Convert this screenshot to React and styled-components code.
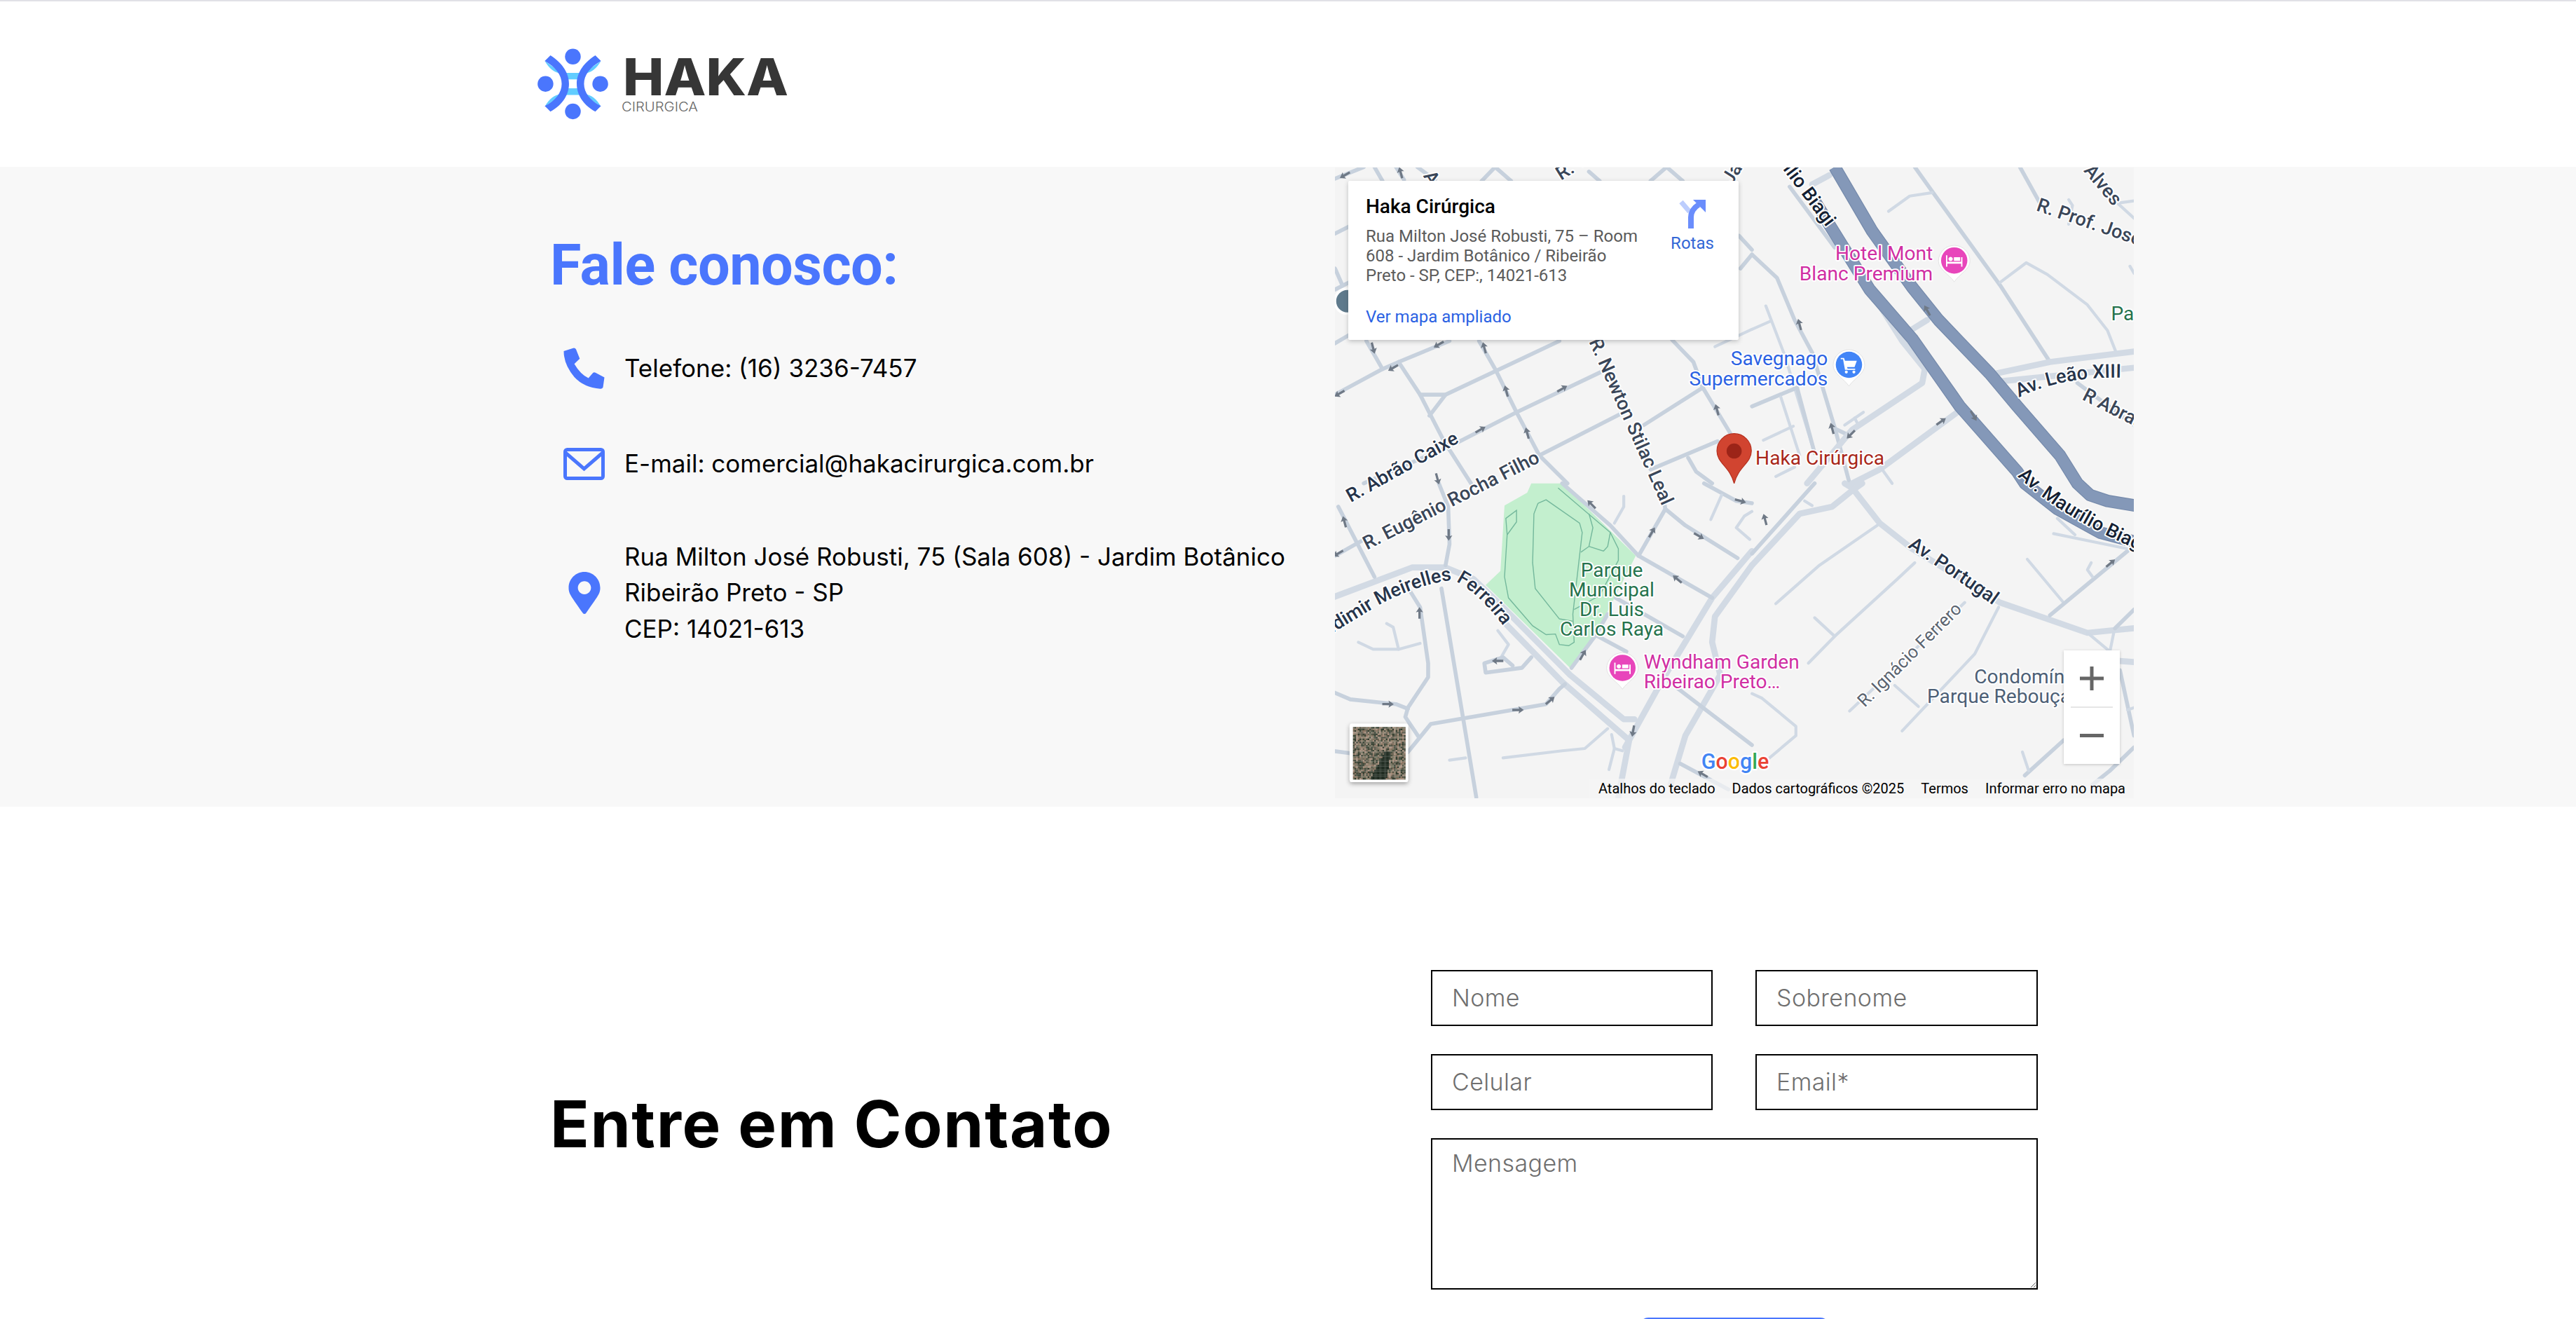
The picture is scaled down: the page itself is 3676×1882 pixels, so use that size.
import React from 'react';
import styled, { createGlobalStyle } from 'styled-components';
import { FaMapMarkerAlt } from 'react-icons/fa';

const GlobalStyle = createGlobalStyle`
  html, body {
    margin: 0;
    padding: 0;
    height: 1882px;
    overflow: hidden;
    background: #fff;
    font-family: Inter, "Liberation Sans", sans-serif;
  }
  * { box-sizing: border-box; }
`;

const Page = styled.div`
  width: 3676px;
  height: 1882px;
  overflow: hidden;
  border-top: 2px solid #e1e1e6;
`;

const Header = styled.header`
  height: 236px;
  padding: 67px 0 0 767px;
`;

const LogoSvg = styled.svg`
  display: block;
  width: 358px;
  height: 101px;
  overflow: visible;
`;

const ContactBand = styled.section`
  display: flex;
  height: 913px;
  padding: 1px 0 0 785px;
  background: #f8f8f8;
`;

const InfoColumn = styled.div`
  width: 1120px;
  flex: none;
`;

const Title = styled.h2`
  margin: 0 0 69px;
  padding-top: 92px;
  font-family: Roboto, sans-serif;
  font-size: 81px;
  line-height: 96px;
  font-weight: 700;
  letter-spacing: -0.5px;
  color: #4a76fd;
`;

const InfoList = styled.div`
  display: flex;
  flex-direction: column;
  gap: 81px;
`;

const InfoRow = styled.div`
  display: flex;
  align-items: center;
`;

const IconSlot = styled.div`
  width: 106px;
  padding-left: 19px;
  flex: none;
  display: flex;
  color: #4a76fd;
  svg { display: block; }
`;

const InfoText = styled.div`
  font-family: Inter, sans-serif;
  font-size: 35px;
  line-height: 51.5px;
  color: #000;
  white-space: nowrap;
`;

const MapFrame = styled.div`
  position: relative;
  width: 1140px;
  height: 900px;
  flex: none;
  overflow: hidden;
  background: #f4f4f4;
  font-family: Roboto, sans-serif;
`;

const MapSvg = styled.svg`
  display: block;
  width: 100%;
  height: 100%;
`;

const MapLabel = styled.text`
  font-family: Roboto, sans-serif;
  font-size: ${p => p.$size || 12}px;
  font-weight: ${p => p.$weight || 400};
  fill: ${p => p.$color || '#26344a'};
  stroke: #fff;
  stroke-width: ${p => p.$halo || 1.6}px;
  stroke-linejoin: round;
  paint-order: stroke;
`;

const InfoCard = styled.div`
  position: absolute;
  left: 19px;
  top: 19px;
  width: 557px;
  height: 227px;
  padding: 20px 25px;
  display: flex;
  justify-content: space-between;
  background: #fff;
  border-radius: 2px;
  box-shadow: 0 2px 6px rgba(60, 64, 67, 0.3);
`;

const PlaceName = styled.div`
  font-size: 28px;
  line-height: 34px;
  font-weight: 500;
  color: #000;
`;

const PlaceAddress = styled.div`
  margin-top: 11px;
  width: 400px;
  font-size: 24px;
  line-height: 28px;
  color: #5b5b5b;
`;

const EnlargeLink = styled.div`
  margin-top: 30px;
  font-size: 24px;
  line-height: 30px;
  color: #2b62e3;
`;

const Directions = styled.div`
  width: 62px;
  margin-right: 10px;
  padding-top: 6px;
  display: flex;
  flex-direction: column;
  align-items: center;
  gap: 6px;
  font-size: 24px;
  line-height: 30px;
  color: #3367d6;
`;

const ZoomBox = styled.div`
  position: absolute;
  right: 20px;
  top: 689px;
  width: 80px;
  height: 162px;
  display: flex;
  flex-direction: column;
  align-items: center;
  background: #fff;
  box-shadow: 0 1px 4px rgba(0, 0, 0, 0.2);
`;

const ZoomButton = styled.div`
  height: 80px;
  width: 100%;
  display: flex;
  align-items: center;
  justify-content: center;
`;

const ZoomDivider = styled.div`
  width: 60px;
  height: 2px;
  background: #e6e6e6;
`;

const MapFooter = styled.div`
  position: absolute;
  right: 0;
  bottom: 0;
  height: 28px;
  padding: 0 12px 0 14px;
  display: flex;
  align-items: center;
  gap: 24px;
  background: rgba(245, 245, 245, 0.72);
  font-size: 20px;
  color: #000;
  white-space: nowrap;
`;

const FormBand = styled.section`
  display: flex;
  padding-left: 785px;
`;

const FormTitle = styled.h2`
  width: 1257px;
  flex: none;
  margin: 0;
  padding-top: 398px;
  font-family: Inter, sans-serif;
  font-size: 92px;
  line-height: 110px;
  font-weight: 700;
  letter-spacing: 1.6px;
  color: #000;
`;

const FormGrid = styled.form`
  padding-top: 233px;
  display: grid;
  grid-template-columns: 402px 403px;
  column-gap: 61px;
  row-gap: 40px;
`;

const fieldCss = `
  width: 100%;
  border: 2px solid #000;
  border-radius: 0;
  background: #fff;
  padding: 0 28px;
  font-family: Inter, sans-serif;
  font-size: 34px;
  font-weight: 300;
  letter-spacing: 0.4px;
  color: #000;
  &::placeholder { color: #6f6f6f; opacity: 1; }
`;

const Field = styled.input`
  ${fieldCss}
  height: 80px;
  padding-bottom: 2px;
`;

const MessageField = styled.textarea`
  ${fieldCss}
  grid-column: 1 / 3;
  display: block;
  height: 216px;
  padding-top: 14px;
  line-height: 40px;
`;

const SubmitRow = styled.div`
  grid-column: 1 / 3;
  display: flex;
  justify-content: center;
`;

const SubmitButton = styled.button`
  width: 270px;
  height: 80px;
  border: 0;
  border-radius: 12px;
  background: #4a76fd;
  color: #fff;
  font-family: Inter, sans-serif;
  font-size: 30px;
`;

// the map was traced from zoomed crops, so each group of points keeps the
// coordinates of the crop it was read from
const zones = {
  a: ([x, y]) => [810.4 + 0.1632 * x, 98.1 + 0.1422 * y],
  b: ([x, y]) => [1066.4 + 0.1524 * x, 98.1 + 0.1422 * y],
  c: ([x, y]) => [810.4 + 0.1632 * x, 294.3 + 0.1422 * y],
  d: ([x, y]) => [1066.4 + 0.1524 * x, 294.3 + 0.1422 * y],
};

const roadKinds = {
  minor: { color: '#c7d1dd', width: 2.4 },
  thin: { color: '#d0d9e4', width: 1.8 },
  ave: { color: '#d2dae4', width: 3.7 },
};

const roads = [
  ['a', 'minor', [[13, 1000], [190, 890], [250, 860], [440, 770]]],
  ['a', 'minor', [[130, 770], [190, 890]]],
  ['a', 'minor', [[250, 860], [330, 1000], [420, 1200], [520, 1380]]],
  ['a', 'minor', [[330, 1000], [425, 1000], [850, 770]]],
  ['a', 'minor', [[425, 1000], [365, 1090]]],
  ['a', 'minor', [[550, 770], [610, 890], [690, 1075], [775, 1260], [880, 1380]]],
  ['a', 'minor', [[120, 1380], [460, 1210], [690, 1075], [1010, 900]]],
  ['a', 'minor', [[775, 1260], [1090, 1075]]],
  ['a', 'minor', [[1165, 1130], [1385, 970]]],
  ['a', 'minor', [[1270, 765], [1350, 860], [1385, 970], [1490, 1170]]],
  ['a', 'minor', [[1190, 1320], [1440, 1200]]],
  ['a', 'minor', [[1330, 1270], [1360, 1330], [1420, 1380]]],
  ['a', 'minor', [[160, 25], [190, 85]]],
  ['a', 'minor', [[240, 25], [270, 80]]],
  ['a', 'minor', [[320, 25], [390, 85]]],
  ['a', 'minor', [[13, 75], [120, 25]]],
  ['a', 'minor', [[560, 85], [610, 25], [670, 85]]],
  ['a', 'minor', [[1190, 85], [1250, 25], [1310, 85]]],
  ['a', 'minor', [[960, 45], [1000, 85]]],
  ['a', 'minor', [[13, 310], [65, 280]]],
  ['a', 'minor', [[13, 460], [40, 530]]],
  ['a', 'minor', [[13, 550], [65, 520]]],
  ['a', 'minor', [[13, 780], [65, 745]]],
  ['a', 'minor', [[1520, 320], [1568, 380]]],
  ['a', 'minor', [[1568, 400], [1525, 460]]],
  ['a', 'thin', [[1430, 795], [1568, 720]]],
  ['b', 'minor', [[150, 110], [330, 370]]],
  ['b', 'ave', [[240, 100], [310, 60]]],
  ['b', 'minor', [[650, 25], [720, 130], [990, 530], [1190, 860]]],
  ['b', 'thin', [[720, 135], [630, 150], [545, 215]]],
  ['b', 'minor', [[1070, 25], [1150, 180]]],
  ['b', 'thin', [[1265, 165], [1280, 190], [1265, 270]]],
  ['b', 'thin', [[990, 520], [1095, 435], [1180, 485], [1340, 615], [1420, 725], [1455, 820]]],
  ['b', 'ave', [[950, 915], [1190, 860], [1526, 815]]],
  ['b', 'ave', [[970, 945], [1526, 885]]],
  ['b', 'minor', [[1300, 950], [1526, 1130]]],
  ['b', 'thin', [[1460, 180], [1526, 170]]],
  ['b', 'thin', [[1460, 180], [1526, 245]]],
  ['b', 'thin', [[1510, 450], [1526, 480]]],
  ['b', 'minor', [[0, 400], [100, 500], [170, 680], [240, 820], [330, 1140], [390, 1380]]],
  ['b', 'thin', [[55, 620], [130, 830], [250, 1250]]],
  ['b', 'thin', [[0, 720], [75, 685]]],
  ['b', 'minor', [[0, 1050], [180, 970], [250, 1250]]],
  ['b', 'thin', [[115, 1010], [190, 1260]]],
  ['b', 'thin', [[45, 1195], [165, 1135]]],
  ['b', 'thin', [[95, 1350], [170, 1310]]],
  ['b', 'minor', [[320, 1140], [380, 1170]]],
  ['b', 'thin', [[370, 1130], [445, 1075]]],
  ['b', 'thin', [[410, 1100], [420, 1120]]],
  ['b', 'ave', [[220, 1380], [400, 1150], [680, 950], [690, 890], [600, 770], [470, 550]]],
  ['b', 'ave', [[400, 1380], [510, 1320], [840, 1060]]],
  ['b', 'thin', [[520, 1320], [560, 1380]]],
  ['b', 'ave', [[640, 720], [700, 680]]],
  ['b', 'thin', [[1150, 1160], [1230, 1260]]],
  ['c', 'ave', [[0, 490], [300, 360], [425, 360], [530, 410], [630, 520], [890, 820], [1090, 1010], [1130, 1010]]],
  ['c', 'ave', [[640, 590], [860, 850], [1110, 1100], [1070, 1344]]],
  ['c', 'ave', [[1095, 1130], [1240, 830], [1420, 490], [1568, 290]]],
  ['c', 'ave', [[1265, 1290], [1320, 1080], [1430, 860], [1450, 820], [1420, 680], [1430, 570], [1568, 350]]],
  ['c', 'minor', [[25, 100], [160, 400]]],
  ['c', 'minor', [[13, 310], [90, 260], [130, 235]]],
  ['c', 'minor', [[400, 0], [435, 100], [440, 260], [425, 350]]],
  ['c', 'minor', [[410, 450], [540, 1344]]],
  ['c', 'minor', [[295, 465], [330, 530], [360, 770], [360, 830], [285, 960], [275, 1000], [325, 1085]]],
  ['c', 'minor', [[0, 890], [70, 925], [240, 945], [285, 965]]],
  ['c', 'minor', [[285, 1150], [370, 1030], [800, 945], [850, 880], [870, 860]]],
  ['c', 'minor', [[0, 1145], [65, 1155]]],
  ['c', 'thin', [[100, 680], [155, 710], [250, 710], [330, 685]]],
  ['c', 'thin', [[205, 600], [230, 615], [250, 710]]],
  ['c', 'thin', [[620, 630], [660, 690], [635, 740]]],
  ['c', 'minor', [[745, 745], [710, 790], [575, 810], [570, 770], [640, 745], [675, 780]]],
  ['c', 'thin', [[640, 1175], [860, 1145], [945, 1135], [1030, 1050]]],
  ['c', 'thin', [[440, 1185], [500, 1175]]],
  ['c', 'thin', [[1045, 1075], [1055, 1135], [1035, 1225]]],
  ['c', 'thin', [[1055, 1135], [1085, 1145]]],
  ['c', 'minor', [[860, 0], [1040, 180], [1145, 310], [1420, 490]]],
  ['c', 'minor', [[1145, 310], [1245, 110], [1230, 0]]],
  ['c', 'minor', [[1245, 110], [1320, 180], [1515, 320]]],
  ['c', 'thin', [[1090, 55], [1090, 100], [1055, 170]]],
  ['c', 'minor', [[1390, 0], [1510, 75], [1568, 85]]],
  ['c', 'thin', [[1455, 50], [1415, 155]]],
  ['c', 'thin', [[1568, 120], [1540, 140], [1510, 190], [1560, 240]]],
  ['c', 'minor', [[985, 650], [1100, 720]]],
  ['c', 'minor', [[1060, 490], [1310, 655]]],
  ['c', 'minor', [[895, 790], [985, 650], [1030, 560]]],
  ['c', 'minor', [[1260, 850], [1568, 1120]]],
  ['c', 'minor', [[1300, 1200], [1480, 1310]]],
  ['d', 'ave', [[370, 0], [400, 20], [510, 170], [640, 280], [990, 510], [1340, 640], [1430, 630], [1526, 620]]],
  ['d', 'ave', [[0, 350], [190, 130], [320, 100], [400, 30], [440, 0]]],
  ['d', 'minor', [[0, 300], [250, 0]]],
  ['d', 'thin', [[210, 75], [240, 95]]],
  ['d', 'thin', [[500, 180], [270, 350], [95, 515]]],
  ['d', 'thin', [[650, 340], [580, 410], [330, 655], [225, 770]]],
  ['d', 'thin', [[250, 575], [330, 655]]],
  ['d', 'thin', [[850, 510], [390, 975]]],
  ['d', 'thin', [[570, 865], [665, 955]]],
  ['d', 'thin', [[985, 530], [890, 730], [600, 1060]]],
  ['d', 'thin', [[1100, 325], [1240, 505]]],
  ['d', 'minor', [[1190, 565], [1500, 290]]],
  ['d', 'thin', [[1355, 340], [1340, 370], [1360, 400]]],
  ['d', 'thin', [[1205, 215], [1500, 280]]],
  ['d', 'thin', [[1220, 150], [1290, 220]]],
  ['d', 'thin', [[1340, 640], [1430, 720], [1445, 640]]],
  ['d', 'minor', [[1470, 800], [1500, 950], [1526, 1080]]],
  ['d', 'thin', [[1526, 960], [1500, 970]]],
  ['d', 'minor', [[1245, 1100], [1090, 1250]]],
  ['d', 'thin', [[1080, 1150], [1105, 1230]]],
  ['d', 'minor', [[1526, 1130], [1430, 1230], [1360, 1290]]],
  ['d', 'ave', [[1470, 760], [1526, 765]]],
  ['d', 'minor', [[1526, 540], [1450, 620]]],
  ['d', 'thin', [[0, 900], [40, 920], [175, 1040], [175, 1080], [20, 1220]]],
];

// both carriageways run across two crops, so they are joined into one line each
const joinCrops = (first, second) => [
  ...first.map(zones.b),
  ...second.map(zones.d),
];

const highways = [
  joinCrops(
    [[330, 25], [480, 300], [640, 540], [745, 680], [950, 910], [1060, 1050], [1230, 1260]],
    [[1300, 0], [1350, 50], [1420, 75], [1530, 95]]
  ),
  joinCrops(
    [[250, 170], [470, 550], [640, 760], [830, 1050], [1060, 1330]],
    [[1090, 0], [1220, 110], [1390, 210], [1530, 250]]
  ),
];

const arrows = [
  ['a', 50, 60, 240], ['a', 258, 50, -15], ['a', 155, 800, 165], ['a', 400, 785, 240],
  ['a', 570, 800, -15], ['a', 230, 885, 240], ['a', 30, 995, 240], ['a', 652, 985, -15],
  ['a', 860, 975, 60], ['a', 555, 1150, 60], ['a', 730, 1165, -15], ['a', 1438, 1065, -15],
  ['a', 395, 1360, 165],
  ['b', 190, 700, -15], ['b', 320, 1145, -15], ['b', 395, 1170, 225], ['b', 700, 640, -30],
  ['b', 885, 1090, 150], ['b', 755, 1115, 55],
  ['c', 48, 165, -15], ['c', 25, 300, 240], ['c', 437, 220, 180], ['c', 970, 90, -45],
  ['c', 1195, 210, 30], ['c', 1370, 225, 120], ['c', 1290, 410, -50], ['c', 328, 555, 0],
  ['c', 620, 760, -90], ['c', 210, 945, 90], ['c', 695, 970, 90], ['c', 815, 930, 50],
  ['c', 937, 735, 30], ['c', 1125, 1060, 190], ['c', 1525, 75, 105], ['c', 1385, 1245, -60],
  ['d', 52, 155, -15], ['d', 1432, 342, 50],
];

const trails = [
  [[770, 85], [800, 70], [925, 170], [935, 210], [900, 560], [905, 680], [885, 695], [850, 690], [835, 645], [800, 648], [750, 610], [660, 490], [645, 400], [655, 220], [690, 165], [690, 115], [650, 150], [655, 220]],
  [[770, 85], [755, 130], [750, 340], [760, 450], [850, 580], [900, 590]],
  [[845, 20], [1040, 210], [1070, 280], [1070, 330], [1000, 480], [905, 540]],
  [[960, 130], [975, 190], [960, 270], [930, 295]],
  [[960, 270], [1015, 290], [1030, 270], [1040, 210]],
];

const park = [[745, 0], [730, 40], [645, 95], [630, 375], [575, 435], [890, 790], [985, 650], [1135, 310], [860, 0]];

const formatPoints = pts => pts.map(p => p.map(n => n.toFixed(1)).join(',')).join(' ');
const toPoints = (zone, pts) => formatPoints(pts.map(zones[zone]));

const Road = ({ zone, kind, pts }) => (
  <polyline
    points={toPoints(zone, pts)}
    fill="none"
    stroke={roadKinds[kind].color}
    strokeWidth={roadKinds[kind].width}
    strokeLinecap="round"
    strokeLinejoin="round"
  />
);

const Arrow = ({ zone, x, y, angle }) => {
  const [cx, cy] = zones[zone]([x, y]);
  return (
    <path
      d="M0 -3.6 L2.2 -0.4 L0.7 -0.8 L0.7 3.4 L-0.7 3.4 L-0.7 -0.8 L-2.2 -0.4 Z"
      fill="#6f7986"
      transform={`translate(${cx} ${cy}) rotate(${angle})`}
    />
  );
};

const Poi = ({ x, y, color, children }) => (
  <g transform={`translate(${x} ${y})`}>
    <path d="M-9.6 0 A9.6 9.6 0 0 1 9.6 0 C9.6 5 3 8 0 12.6 C-3 8 -9.6 5 -9.6 0 Z" fill="#fff" stroke="#d8d8d8" strokeWidth="0.3" />
    <circle r="8" cy="-0.4" fill={color} />
    {children}
  </g>
);

const BedGlyph = () => (
  <path d="M-5 -3.6 H-4.2 V0.4 H4.2 V-2.4 H5 V3.4 H4.2 V1.6 H-4.2 V3.4 H-5 Z M-2.2 -2.6 a1.3 1.3 0 1 0 0.01 0 Z M-0.2 -2.4 H3.6 V-0.2 H-0.2 Z" fill="#fff" />
);

const CartGlyph = () => (
  <g fill="#fff">
    <path d="M-5 -4.6 H-3 L-2.4 -2.8 H4.8 L3.4 1 H-1.2 L-0.8 1.9 H3.8 V2.7 H-2.4 L-3.6 -3.8 H-5 Z" />
    <circle cx="-1.6" cy="4" r="0.9" />
    <circle cx="3" cy="4" r="0.9" />
  </g>
);

// mottled tile standing for the aerial preview of the layer switch
const SatelliteTile = () => {
  const tones = ['#6d6554', '#3c4434', '#8f7f6a', '#2f3a2c', '#a58d7c', '#75735f', '#4f4f40', '#866f5c'];
  const cells = [];
  for (let row = 0; row < 32; row += 1) {
    for (let col = 0; col < 32; col += 1) {
      const h = Math.abs(Math.sin(row * 12.9898 + col * 78.233) * 43758.5453) % 1;
      // dark band of trees running down the lower middle of the tile
      const band = row > 14 && Math.abs(col - (26 - row * 0.35)) < 2 + (row - 14) * 0.16;
      cells.push(
        <rect
          key={`${row}-${col}`}
          x={823.4 + col}
          y={442.6 + row}
          width="1.05"
          height="1.05"
          fill={band ? '#1f2b20' : tones[Math.floor(h * tones.length)]}
        />
      );
    }
  }
  return (
    <g>
      <rect x="821.4" y="440.6" width="35.6" height="35.6" rx="1.5" fill="#fff" filter="url(#tileShadow)" />
      {cells}
    </g>
  );
};

const CityMap = () => (
  <MapSvg viewBox="812.5 102 486.3 384">
    <rect x="812" y="101" width="488" height="386" fill="#f4f4f4" />
    <polygon points={toPoints('c', park)} fill="#c3efce" />
    {trails.map((pts, i) => (
      <polyline key={i} points={toPoints('c', pts)} fill="none" stroke="#74b89c" strokeWidth="0.6" />
    ))}
    {roads.map(([zone, kind, pts], i) => (
      <Road key={i} zone={zone} kind={kind} pts={pts} />
    ))}
    {highways.map((pts, i) => (
      <g key={i}>
        <polyline points={formatPoints(pts)} fill="none" stroke="#7489aa" strokeWidth="7.6" strokeLinejoin="round" />
        <polyline points={formatPoints(pts)} fill="none" stroke="#8498b8" strokeWidth="6.6" strokeLinejoin="round" />
      </g>
    ))}
    {arrows.map(([zone, x, y, angle], i) => (
      <Arrow key={i} zone={zone} x={x} y={y} angle={angle} />
    ))}

    <defs>
      <path id="meirelles" d="M799.5 392.5 L838 369 Q862 356 884 353 Q900 360 917 384" />
      <path id="maurilio" d="M1228 290 Q1255 315 1302 335" />
      <path id="portugal" d="M1161 333 Q1190 352 1218 372" />
      <path id="leao" d="M1229 242 Q1255 229 1292 230" />
      <filter id="tileShadow" x="-20%" y="-20%" width="140%" height="140%">
        <feDropShadow dx="0" dy="1" stdDeviation="1.4" floodColor="#000" floodOpacity="0.35" />
      </filter>
    </defs>

    <MapLabel $size={11.6} $weight={500} $color="#26344a" transform="translate(822 306) rotate(-29)">R. Abrão Caixe</MapLabel>
    <MapLabel $size={11.6} $weight={500} $color="#3a4658" transform="translate(832 335) rotate(-27)">R. Eugênio Rocha Filho</MapLabel>
    <MapLabel $size={11.6} $weight={500} $color="#3a4658" transform="translate(967 208) rotate(66)">R. Newton Stilac Leal</MapLabel>
    <MapLabel $size={11.6} $weight={500} $color="#26344a"><textPath href="#meirelles">Valdimir Meirelles Ferreira</textPath></MapLabel>
    <MapLabel $size={11.6} $weight={500} $color="#141f33"><textPath href="#maurilio">Av. Maurílio Biagi</textPath></MapLabel>
    <MapLabel $size={11.6} $weight={500} $color="#26344a"><textPath href="#portugal">Av. Portugal</textPath></MapLabel>
    <MapLabel $size={11.6} $weight={500} $color="#26344a"><textPath href="#leao">Av. Leão XIII</textPath></MapLabel>
    <MapLabel $size={11.6} $weight={500} $color="#141f33" transform="translate(1085 103) rotate(53)">ílio Biagi</MapLabel>
    <MapLabel $color="#5b6470" $size={10.8} transform="translate(1135 431) rotate(-45)">R. Ignácio Ferrero</MapLabel>
    <MapLabel $size={11.6} $weight={500} $color="#3a4658" transform="translate(1239 128) rotate(19)">R. Prof. José</MapLabel>
    <MapLabel $size={11.6} $weight={500} $color="#3a4658" transform="translate(1268 104) rotate(50)">Alves</MapLabel>
    <MapLabel $size={11.6} $weight={500} $color="#3a4658" transform="translate(1267 243) rotate(27)">R Abraão</MapLabel>
    <MapLabel $size={11.6} $weight={500} $color="#3a4658" transform="translate(866 107) rotate(58)">Av</MapLabel>
    <MapLabel $size={11.6} $weight={500} $color="#3a4658" transform="translate(950 110) rotate(-32)">R. C</MapLabel>
    <MapLabel $size={11.6} $weight={500} $color="#3a4658" transform="translate(1054 113) rotate(-58)">Jatti</MapLabel>

    <MapLabel $color="#26734d" textAnchor="middle" x="981" y="351">Parque</MapLabel>
    <MapLabel $color="#26734d" textAnchor="middle" x="981" y="363">Municipal</MapLabel>
    <MapLabel $color="#26734d" textAnchor="middle" x="981" y="375">Dr. Luis</MapLabel>
    <MapLabel $color="#26734d" textAnchor="middle" x="981" y="387">Carlos Raya</MapLabel>
    <MapLabel $color="#26734d" x="1285" y="195">Pa</MapLabel>
    <MapLabel $color="#d02fa3" x="1000.5" y="407">Wyndham Garden</MapLabel>
    <MapLabel $color="#d02fa3" x="1000.5" y="419">Ribeirao Preto…</MapLabel>
    <MapLabel $color="#d02fa3" textAnchor="end" x="1176.5" y="158.5">Hotel Mont</MapLabel>
    <MapLabel $color="#d02fa3" textAnchor="end" x="1176.5" y="170.5">Blanc Premium</MapLabel>
    <MapLabel $color="#2b62e3" textAnchor="end" x="1112.5" y="222.5">Savegnago</MapLabel>
    <MapLabel $color="#2b62e3" textAnchor="end" x="1112.5" y="234.5">Supermercados</MapLabel>
    <MapLabel $color="#a8271a" x="1068.5" y="283">Haka Cirúrgica</MapLabel>
    <MapLabel $color="#4d6076" x="1201.7" y="416">Condomínio</MapLabel>
    <MapLabel $color="#4d6076" x="1173" y="428">Parque Rebouças</MapLabel>

    <circle cx="820" cy="183.4" r="8.4" fill="#fff" />
    <circle cx="820" cy="183.4" r="6.8" fill="#5f7a8c" />

    <Poi x={1189.5} y={159} color="#e846bb"><BedGlyph /></Poi>
    <Poi x={1125.4} y={222.5} color="#4285f7"><CartGlyph /></Poi>
    <Poi x={987.5} y={407} color="#e846bb"><BedGlyph /></Poi>

    <path d="M1055.5 294.4 C1053 284 1045 282 1045 274.5 A10.5 10.5 0 0 1 1066 274.5 C1066 282 1058 284 1055.5 294.4 Z" fill="#d14430" stroke="#b5301f" strokeWidth="0.5" />
    <circle cx="1055.5" cy="274.6" r="4.6" fill="#9c2418" />

    <SatelliteTile />

    <MapLabel $size={13} $halo={2} $weight={500} x="1035.5" y="468">
      <tspan fill="#4285f4">G</tspan>
      <tspan fill="#ea4335">o</tspan>
      <tspan fill="#fbbc05">o</tspan>
      <tspan fill="#4285f4">g</tspan>
      <tspan fill="#34a853">l</tspan>
      <tspan fill="#ea4335">e</tspan>
    </MapLabel>
  </MapSvg>
);

const PhoneIcon = () => (
  <svg width="59" height="59" viewBox="45 53 173 176" fill="currentColor">
    <path d="M45 68 L85 55 Q93 53 97 60 L113 100 L90 122 Q115 165 150 183 L170 160 Q175 157 180 160 L218 180 L212 222 Q208 229 200 228 Q130 222 90 178 Q45 125 45 68 Z" />
  </svg>
);

const MailIcon = () => (
  <svg width="59" height="46" viewBox="0 0 59 46" fill="none" stroke="currentColor" strokeWidth="5">
    <rect x="2.5" y="2.5" width="54" height="41" rx="3" />
    <path d="M3 7 L29.5 30 L56 7" />
  </svg>
);

const RouteIcon = () => (
  <svg width="38" height="42" viewBox="0 0 38 42" fill="none">
    <path d="M3 4 L15 18" stroke="#bccdfd" strokeWidth="7" />
    <path d="M17 42 V26 Q17 15 28 8" stroke="#6a8dfc" strokeWidth="8" />
    <path d="M20 1 H38 V19 Z" fill="#6a8dfc" />
  </svg>
);

const PlusIcon = () => (
  <svg width="34" height="34" viewBox="0 0 34 34" fill="#666">
    <rect x="14.5" width="5" height="34" />
    <rect y="14.5" width="34" height="5" />
  </svg>
);

const MinusIcon = () => (
  <svg width="34" height="6" viewBox="0 0 34 6" fill="#666">
    <rect width="34" height="5" />
  </svg>
);

const wing = 'M137 238 C195 275 216 320 216 359 C216 398 195 445 137 477 L113 453 C160 430 185 395 185 359 C185 323 160 288 113 262 Z';

const Logo = () => (
  <LogoSvg viewBox="0 0 358 101">
    <g transform="scale(0.3355) translate(-82 -208)">
      <g fill="#62cdff">
        <path d="M113 262 C135 300 165 322 200 312 L265 312 C300 322 330 300 352 262 C320 285 290 300 270 340 L195 340 C175 300 145 285 113 262 Z" />
        <path d="M113 456 C135 418 165 396 200 406 L265 406 C300 396 330 418 352 456 C320 433 290 418 270 378 L195 378 C175 418 145 433 113 456 Z" />
      </g>
      <g fill="#4a76fd">
        <circle cx="232.5" cy="243" r="33.5" />
        <circle cx="232.5" cy="476" r="33.5" />
        <circle cx="116" cy="359" r="33.5" />
        <circle cx="349" cy="359" r="33.5" />
        <path d={wing} />
        <path transform="translate(465 0) scale(-1 1)" d={wing} />
      </g>
    </g>
    <text x="122" y="67" fontFamily="Inter, sans-serif" fontWeight="800" fontSize="73" fill="#363636" textLength="236" lengthAdjust="spacingAndGlyphs">HAKA</text>
    <text x="120" y="90" fontFamily="Inter, sans-serif" fontWeight="300" fontSize="18" fill="#666" textLength="109" lengthAdjust="spacingAndGlyphs">CIRURGICA</text>
  </LogoSvg>
);

const App = () => (
  <Page>
    <GlobalStyle />
    <Header>
      <Logo />
    </Header>
    <ContactBand>
      <InfoColumn>
        <Title>Fale conosco:</Title>
        <InfoList>
          <InfoRow>
            <IconSlot><PhoneIcon /></IconSlot>
            <InfoText>Telefone: (16) 3236-7457</InfoText>
          </InfoRow>
          <InfoRow>
            <IconSlot><MailIcon /></IconSlot>
            <InfoText>E-mail: comercial@hakacirurgica.com.br</InfoText>
          </InfoRow>
          <InfoRow>
            <IconSlot><FaMapMarkerAlt size={60} /></IconSlot>
            <InfoText>
              Rua Milton José Robusti, 75 (Sala 608) - Jardim Botânico<br />
              Ribeirão Preto - SP<br />
              CEP: 14021-613
            </InfoText>
          </InfoRow>
        </InfoList>
      </InfoColumn>
      <MapFrame>
        <CityMap />
        <InfoCard>
          <div>
            <PlaceName>Haka Cirúrgica</PlaceName>
            <PlaceAddress>Rua Milton José Robusti, 75 – Room 608 - Jardim Botânico / Ribeirão Preto - SP, CEP:, 14021-613</PlaceAddress>
            <EnlargeLink>Ver mapa ampliado</EnlargeLink>
          </div>
          <Directions>
            <RouteIcon />
            <span>Rotas</span>
          </Directions>
        </InfoCard>
        <ZoomBox>
          <ZoomButton><PlusIcon /></ZoomButton>
          <ZoomDivider />
          <ZoomButton><MinusIcon /></ZoomButton>
        </ZoomBox>
        <MapFooter>
          <span>Atalhos do teclado</span>
          <span>Dados cartográficos ©2025</span>
          <span>Termos</span>
          <span>Informar erro no mapa</span>
        </MapFooter>
      </MapFrame>
    </ContactBand>
    <FormBand>
      <FormTitle>Entre em Contato</FormTitle>
      <FormGrid>
        <Field placeholder="Nome" />
        <Field placeholder="Sobrenome" />
        <Field placeholder="Celular" />
        <Field placeholder="Email*" />
        <MessageField placeholder="Mensagem" />
        <SubmitRow>
          <SubmitButton type="button">Enviar</SubmitButton>
        </SubmitRow>
      </FormGrid>
    </FormBand>
  </Page>
);

export default App;
